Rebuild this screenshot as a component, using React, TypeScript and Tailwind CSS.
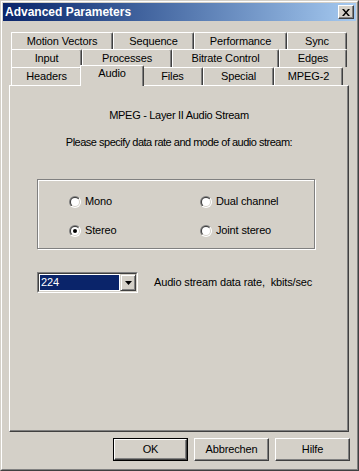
import { useId } from 'react';

type TabProps = {
  label: string,
  width: number,
  selected?: boolean
}

const tabW: Record<number, string> = {
  102: 'w-[102px]', 81: 'w-[81px]', 93: 'w-[93px]', 60: 'w-[60px]',
  71: 'w-[71px]', 90: 'w-[90px]', 107: 'w-[107px]', 68: 'w-[68px]',
  64: 'w-[64px]', 61: 'w-[61px]', 69: 'w-[69px]',
}

const Tab = ({ label, width, selected }: TabProps) => {
  if (selected) {
    return (
      <div className={`${tabW[width]} -mx-[2px] h-[21px] -mb-px relative z-10 bg-[#d4d0c8] border-t border-l border-white border-r border-r-[#404040] shadow-[inset_-1px_0_0_#808080] rounded-tr-[2px] rounded-tl-[1px] flex justify-center pt-[1px] shrink-0`}>
        {label}
      </div>
    );
  }
  return (
    <div className={`${tabW[width]} h-full bg-[#d4d0c8] border-t border-l border-white border-r border-r-[#404040] shadow-[inset_-1px_0_0_#808080] rounded-tr-[2px] rounded-tl-[1px] flex items-center justify-center shrink-0`}>
      {label}
    </div>
  );
}

const Radio = ({ label, checked }: { label: string, checked?: boolean }) => {
  const id = useId().replace(/:/g, '');
  return (
    <div className="flex items-center gap-[4px] h-[13px]">
      <svg width="12" height="12" viewBox="0 0 12 12" className="shrink-0">
        <defs>
          <linearGradient id={`o${id}`} x1="0" y1="0" x2="1" y2="1">
            <stop offset="0.5" stopColor="#808080" />
            <stop offset="0.5" stopColor="#ffffff" />
          </linearGradient>
          <linearGradient id={`i${id}`} x1="0" y1="0" x2="1" y2="1">
            <stop offset="0.5" stopColor="#404040" />
            <stop offset="0.5" stopColor="#d4d0c8" />
          </linearGradient>
        </defs>
        <circle cx="6" cy="6" r="6" fill={`url(#o${id})`} />
        <circle cx="6" cy="6" r="5" fill={`url(#i${id})`} />
        <circle cx="6" cy="6" r="4" fill="#ffffff" />
        {checked && <circle cx="6" cy="6" r="2" fill="#000000" />}
      </svg>
      <span>{label}</span>
    </div>
  );
}

const Button = ({ label, isDefault }: { label: string, isDefault?: boolean }) => (
  <div className={`w-[75px] h-[23px] ${isDefault ? 'border border-black' : ''}`}>
    <div className="h-full border border-t-white border-l-white border-r-[#404040] border-b-[#404040] shadow-[inset_-1px_-1px_0_#808080] flex items-center justify-center">
      {label}
    </div>
  </div>
);

export default function App() {
  return (
    <div className="w-[359px] h-[471px] bg-[#d4d0c8] border border-t-[#d4d0c8] border-l-[#d4d0c8] border-r-[#404040] border-b-[#404040] font-['Liberation_Sans',Arial,sans-serif] text-[11px] leading-[13px] tracking-[-0.15px] text-black">
      <div className="h-full border border-t-white border-l-white border-r-[#808080] border-b-[#808080] p-px flex flex-col">

        {/* title bar */}
        <div className="h-[18px] bg-gradient-to-r from-[#0a246a] to-[#a6caf0] flex items-center justify-between pl-[2px] pr-[2px]">
          <span className="text-white font-bold text-[12px] tracking-normal">Advanced Parameters</span>
          <div className="w-[16px] h-[14px] bg-[#d4d0c8] border border-t-white border-l-white border-r-[#404040] border-b-[#404040] shadow-[inset_-1px_-1px_0_#808080] flex items-center justify-center">
            <svg width="8" height="7" viewBox="0 0 8 7">
              <path d="M0 0h2l2 2.5L6 0h2L5 3.5 8 7H6L4 4.5 2 7H0l3-3.5z" fill="#000" />
            </svg>
          </div>
        </div>

        {/* tabs */}
        <div className="pl-[6px] pt-[11px] flex flex-col">
          <div className="pl-[2px]">
            <div className="flex h-[17px]">
              <Tab label="Motion Vectors" width={102} />
              <Tab label="Sequence" width={81} />
              <Tab label="Performance" width={93} />
              <Tab label="Sync" width={60} />
            </div>
            <div className="flex h-[18px]">
              <Tab label="Input" width={71} />
              <Tab label="Processes" width={90} />
              <Tab label="Bitrate Control" width={107} />
              <Tab label="Edges" width={68} />
            </div>
            <div className="flex h-[18px] items-end">
              <Tab label="Headers" width={71} />
              <Tab label="Audio" width={64} selected />
              <Tab label="Files" width={61} />
              <Tab label="Special" width={71} />
              <Tab label="MPEG-2" width={69} />
            </div>
          </div>

          {/* panel */}
          <div className="w-[340px] h-[347px] border border-t-white border-l-white border-r-[#404040] border-b-[#404040] shadow-[inset_-1px_-1px_0_#808080]">
            <p className="pt-[23px] text-center tracking-[-0.3px]">MPEG - Layer II Audio Stream</p>
            <p className="mt-[14px] text-center tracking-[-0.5px]">Please specify data rate and mode of audio stream:</p>

            <div className="ml-[27px] mt-[30px] w-[278px] h-[70px] border border-[#808080] shadow-[inset_1px_1px_0_#fff,1px_1px_0_#fff] pl-[31px] pt-[15px]">
              <div className="grid grid-cols-[131px_1fr] gap-y-[16px]">
                <Radio label="Mono" />
                <Radio label="Dual channel" />
                <Radio label="Stereo" checked />
                <Radio label="Joint stereo" />
              </div>
            </div>

            <div className="ml-[27px] mt-[23px] flex items-center">
              <div className="w-[101px] h-[21px] border border-t-[#808080] border-l-[#808080] border-r-white border-b-white">
                <div className="h-full border border-t-[#404040] border-l-[#404040] border-r-[#d4d0c8] border-b-[#d4d0c8] bg-white flex">
                  <div className="flex-1 m-px bg-[#0a246a] text-white flex items-center pl-[1px]">224</div>
                  <div className="w-[16px] h-full bg-[#d4d0c8] border border-t-[#d4d0c8] border-l-[#d4d0c8] border-r-[#404040] border-b-[#404040] shadow-[inset_1px_1px_0_#fff,inset_-1px_-1px_0_#808080] flex items-center justify-center">
                    <svg width="7" height="4" viewBox="0 0 7 4">
                      <path d="M0 0h7L3.5 4z" fill="#000" />
                    </svg>
                  </div>
                </div>
              </div>
              <span className="ml-[16px]">Audio stream data rate,&nbsp; kbits/sec</span>
            </div>
          </div>
        </div>

        {/* buttons */}
        <div className="flex justify-end gap-[6px] pr-[6px] mt-[6px]">
          <Button label="OK" isDefault />
          <Button label="Abbrechen" />
          <Button label="Hilfe" />
        </div>
      </div>
    </div>
  );
}
